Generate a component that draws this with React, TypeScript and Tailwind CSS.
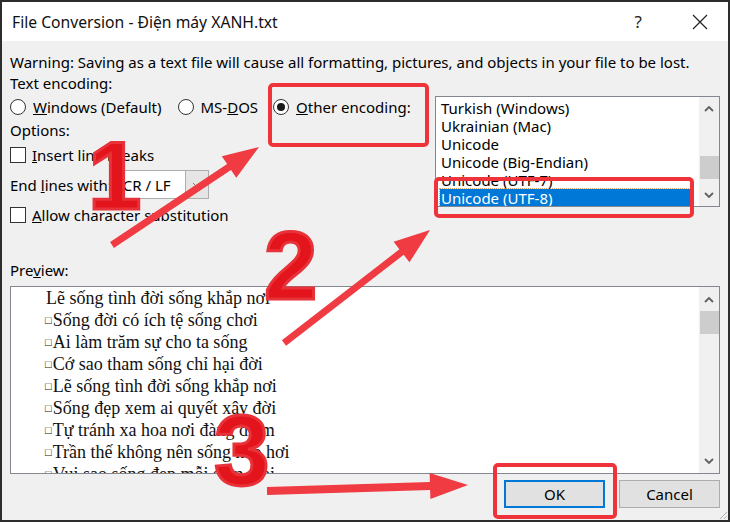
import React from "react";

const PREVIEW = [
  { box: false, text: "Lẽ sống tình đời sống khắp nơi" },
  { box: true, text: "Sống đời có ích tệ sống chơi" },
  { box: true, text: "Ai làm trăm sự cho ta sống" },
  { box: true, text: "Cớ sao tham sống chỉ hại đời" },
  { box: true, text: "Lẽ sống tình đời sống khắp nơi" },
  { box: true, text: "Sống đẹp xem ai quyết xây đời" },
  { box: true, text: "Tự tránh xa hoa nơi đàng điếm" },
  { box: true, text: "Trần thế không nên sống hao hơi" },
  { box: true, text: "Vui sao sống đẹp mỗi sớm mai" },
];

const ENCODINGS = [
  "Turkish (Windows)",
  "Ukrainian (Mac)",
  "Unicode",
  "Unicode (Big-Endian)",
  "Unicode (UTF-7)",
  "Unicode (UTF-8)",
];

function arrowPoints(x1: number, y1: number, x2: number, y2: number, w: number, hl: number, hw: number) {
  const len = Math.hypot(x2 - x1, y2 - y1);
  const dx = (x2 - x1) / len;
  const dy = (y2 - y1) / len;
  const nx = -dy;
  const ny = dx;
  const bx = x2 - dx * hl;
  const by = y2 - dy * hl;
  const pts = [
    [x1 + (nx * w) / 2, y1 + (ny * w) / 2],
    [bx + (nx * w) / 2, by + (ny * w) / 2],
    [bx + (nx * hw) / 2, by + (ny * hw) / 2],
    [x2, y2],
    [bx - (nx * hw) / 2, by - (ny * hw) / 2],
    [bx - (nx * w) / 2, by - (ny * w) / 2],
    [x1 - (nx * w) / 2, y1 - (ny * w) / 2],
  ];
  return pts.map((p) => p.map((v) => v.toFixed(1)).join(",")).join(" ");
}

function Chevron({ up }: { up?: boolean }) {
  return (
    <svg width="10" height="7" viewBox="0 0 10 7">
      <path
        d={up ? "M1 6 L5 2 L9 6" : "M1 1 L5 5 L9 1"}
        fill="none"
        stroke="#606060"
        strokeWidth="1.8"
      />
    </svg>
  );
}

function Radio({ checked, children }: { checked?: boolean; children: React.ReactNode }) {
  return (
    <div className="flex items-center gap-[7px]">
      <span className="w-4 h-4 rounded-full border-[1.5px] border-[#333] bg-white flex items-center justify-center">
        {checked && <span className="w-2 h-2 rounded-full bg-[#1a1a1a]" />}
      </span>
      <span>{children}</span>
    </div>
  );
}

function Check({ children }: { children: React.ReactNode }) {
  return (
    <div className="flex items-center gap-[6px] h-[18px]">
      <span className="w-4 h-4 border-[1.5px] border-[#333] bg-white" />
      <span>{children}</span>
    </div>
  );
}

export default function App() {
  return (
    <div className="w-[730px] h-[522px] relative overflow-hidden bg-[#f0f0f0] border-2 border-[#2d2d2d] font-['Noto_Sans',sans-serif] text-[15px] leading-[18px] text-black">
      {/* title bar */}
      <div className="h-[39px] bg-white flex items-center pl-[10px] pr-[20px]">
        <span className="text-[15.7px] text-[#111]">File Conversion - Điện máy XANH.txt</span>
        <span className="ml-auto text-[17px] text-[#222] mr-[50px]">?</span>
        <svg width="16" height="16" viewBox="0 0 16 16">
          <path d="M1 1 L15 15 M15 1 L1 15" stroke="#222" strokeWidth="1.2" />
        </svg>
      </div>

      {/* body */}
      <div className="pl-[8px] pr-[7px] pt-[12px]">
        <div className="whitespace-nowrap">Warning: Saving as a text file will cause all formatting, pictures, and objects in your file to be lost.</div>
        <div className="mt-[3px]">Text encoding:</div>

        <div className="flex mt-[4px]">
          <div className="w-[425px]">
            <div className="h-[22px] flex items-center whitespace-nowrap">
              <Radio>
                <u>W</u>indows (Default)
              </Radio>
              <div className="ml-[16px]">
                <Radio>
                  MS-<u>D</u>OS
                </Radio>
              </div>
              <div className="ml-[15px]">
                <Radio checked>
                  <u>O</u>ther encoding:
                </Radio>
              </div>
            </div>
            <div className="mt-[3px]">Options:</div>
            <div className="mt-[7px]">
              <Check>
                <u>I</u>nsert line breaks
              </Check>
            </div>
            <div className="mt-[6px] h-[29px] flex items-center">
              <span className="whitespace-nowrap">
                End <u>l</u>ines with:
              </span>
              <div className="ml-[3px] h-[29px] w-[94px] flex border border-[#adadad] bg-white">
                <div className="flex-1 flex items-center pl-[7px] whitespace-nowrap">CR / LF</div>
                <div className="w-[23px] bg-[#e5e5e5] border-l border-[#adadad] flex items-center justify-center">
                  <svg width="9" height="6" viewBox="0 0 9 6">
                    <path d="M1 1 L4.5 4.5 L8 1" fill="none" stroke="#777" strokeWidth="1" />
                  </svg>
                </div>
              </div>
            </div>
            <div className="mt-[7px]">
              <Check>
                <u>A</u>llow character substitution
              </Check>
            </div>
          </div>

          {/* encodings list */}
          <div className="w-[285px] h-[111px] border border-[#828790] bg-white flex overflow-hidden">
            <div className="flex-1 pt-[2px] pl-[4px] pr-[9px]">
              {ENCODINGS.map((e, i) => (
                <div
                  key={e}
                  className={`h-[18px] pl-[1px] whitespace-nowrap ${i === 5 ? "bg-[#0078d7] text-white outline-dotted outline-1 outline-[#e8a060]" : ""}`}
                >
                  {e}
                </div>
              ))}
            </div>
            <div className="w-[20px] bg-[#f0f0f0] flex flex-col items-center">
              <div className="h-[22px] flex items-center">
                <Chevron up />
              </div>
              <div className="mt-[37px] w-[19px] h-[23px] bg-[#cdcdcd]" />
              <div className="mt-auto h-[22px] flex items-center">
                <Chevron />
              </div>
            </div>
          </div>
        </div>

        <div className="mt-[37px]">
          Pre<u>v</u>iew:
        </div>

        {/* preview */}
        <div className="mt-[7px] w-[710px] h-[188px] border border-[#828790] bg-white flex overflow-hidden">
          <div className="flex-1 pl-[34px] font-['Liberation_Serif',serif] text-[18px] leading-[22px] text-[#111]">
            {PREVIEW.map((l, i) => (
              <div key={i} className={`h-[22px] whitespace-nowrap ${l.box ? "" : "pl-[1px]"}`}>
                {l.box && <span className="relative -top-[2px] text-[11px] leading-none mr-[1px]">□</span>}
                {l.text}
              </div>
            ))}
          </div>
          <div className="w-[20px] bg-[#f0f0f0] flex flex-col items-center">
            <div className="h-[24px] flex items-center">
              <Chevron up />
            </div>
            <div className="w-[19px] h-[23px] bg-[#cdcdcd]" />
            <div className="mt-auto h-[24px] flex items-center">
              <Chevron />
            </div>
          </div>
        </div>

        {/* buttons */}
        <div className="mt-[6px] flex justify-end gap-[14px] pr-[1px]">
          <button className="w-[101px] h-[28px] border-2 border-[#0078d7] bg-[#e1e1e1]">OK</button>
          <button className="w-[101px] h-[28px] border border-[#adadad] bg-[#e1e1e1]">Cancel</button>
        </div>
      </div>

      {/* resize grip */}
      <svg className="absolute right-0 bottom-0" width="12" height="12" viewBox="0 0 12 12">
        <path d="M11 4 L4 11 M11 8 L8 11" stroke="#b0b0b0" strokeWidth="1" />
      </svg>

      {/* annotations */}
      <div className="absolute left-[266px] top-[81px] w-[161px] h-[64px] border-4 border-[#ee333a] rounded-[5px]" />
      <div className="absolute left-[432px] top-[175px] w-[260px] h-[41px] border-4 border-[#ee333a] rounded-[5px]" />
      <div className="absolute left-[491px] top-[461px] w-[124px] h-[56px] border-4 border-[#ee333a] rounded-[5px]" />

      <svg className="absolute left-[-2px] top-[-2px] pointer-events-none" width="730" height="522">
        <polygon points={arrowPoints(112, 245, 259, 147, 7, 36, 26)} fill="#ef3b41" />
        <polygon points={arrowPoints(284, 343, 430, 230, 7, 36, 26)} fill="#ef3b41" />
        <polygon points={arrowPoints(267, 491, 468, 485, 8, 38, 26)} fill="#ef3b41" />
      </svg>

      <div className="absolute left-[86px] top-[126px] font-['Liberation_Sans',sans-serif] font-bold text-[96px] leading-none text-[#e3141b] [-webkit-text-stroke:3px_#e8323a]">
        1
      </div>
      <div className="absolute left-[262px] top-[216px] font-['Liberation_Sans',sans-serif] font-bold text-[96px] leading-none text-[#e3141b] [-webkit-text-stroke:3px_#e8323a]">
        2
      </div>
      <div className="absolute left-[212px] top-[398px] font-['Liberation_Sans',sans-serif] font-bold text-[100px] leading-none text-[#e3141b] [-webkit-text-stroke:3px_#e8323a]">
        3
      </div>
    </div>
  );
}
